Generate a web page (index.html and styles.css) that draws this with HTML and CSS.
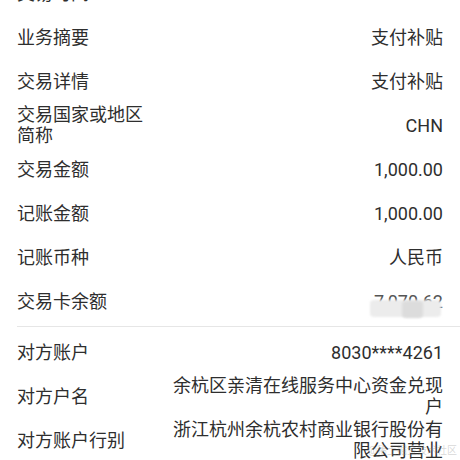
FILE: index.html
```html
<!DOCTYPE html>
<html lang="zh-CN">
<head>
  <meta charset="UTF-8">
  <title>交易明细</title>
  <link rel="stylesheet" href="styles.css">
</head>

<body>
<div id="detail">
  <div class="group first">
    <div class="row"><div class="label">交易时间</div><div class="value">2020-03-27 10:21:45</div></div>
    <div class="row"><div class="label">业务摘要</div><div class="value">支付补贴</div></div>
    <div class="row"><div class="label">交易详情</div><div class="value">支付补贴</div></div>
    <div class="row"><div class="label">交易国家或地区简称</div><div class="value">CHN</div></div>
    <div class="row"><div class="label">交易金额</div><div class="value">1,000.00</div></div>
    <div class="row"><div class="label">记账金额</div><div class="value">1,000.00</div></div>
    <div class="row"><div class="label">记账币种</div><div class="value">人民币</div></div>
    <div class="row"><div class="label">交易卡余额</div><div class="value"><span class="masked">7,070.62<span class="smudge"></span><span class="smudge dark"></span></span></div></div>
  </div>
  <div class="group second">
    <div class="row"><div class="label">对方账户</div><div class="value">8030****4261</div></div>
    <div class="row"><div class="label">对方户名</div><div class="value">余杭区亲清在线服务中心资金兑现户</div></div>
    <div class="row"><div class="label">对方账户行别</div><div class="value">浙江杭州余杭农村商业银行股份有限公司营业</div></div>
  </div>
</div>
<div class="watermark">@稀土掘金技术社区</div>
</body>
</html>
```

FILE: styles.css
```css
html, body {
  margin: 0;
  padding: 0;
  background: #fff;
  overflow: hidden;
}

body {
  font-family: Roboto, "Noto Sans CJK SC", sans-serif;
  font-size: 18px;
  color: #2e2e2e;
  width: 460px;
  height: 460px;
}

.group {
  margin-left: 17px;
}

.group.first {
  margin-top: -29px;
  padding-bottom: 3px;
  border-bottom: 1px solid #e6e6e6;
}

.group.second {
  padding-top: 3px;
}

.row {
  display: flex;
  align-items: center;
  min-height: 44px;
  padding-right: 17px;
  line-height: 21px;
}

.label {
  flex: none;
  width: 130px;
}

.value {
  flex: 1;
  margin-left: 20px;
  text-align: right;
}

.masked {
  position: relative;
  color: #555;
}

.smudge {
  position: absolute;
  left: -4px;
  right: 2px;
  top: 9px;
  height: 17px;
  background: #ececec;
  border-radius: 4px;
  filter: blur(1px);
}

.smudge.dark {
  left: 28px;
  right: 20px;
  top: 10px;
  background: #dcdcdc;
}

.watermark {
  position: absolute;
  right: 3px;
  bottom: 3px;
  font-size: 10px;
  color: rgba(140, 140, 140, 0.35);
}
```
